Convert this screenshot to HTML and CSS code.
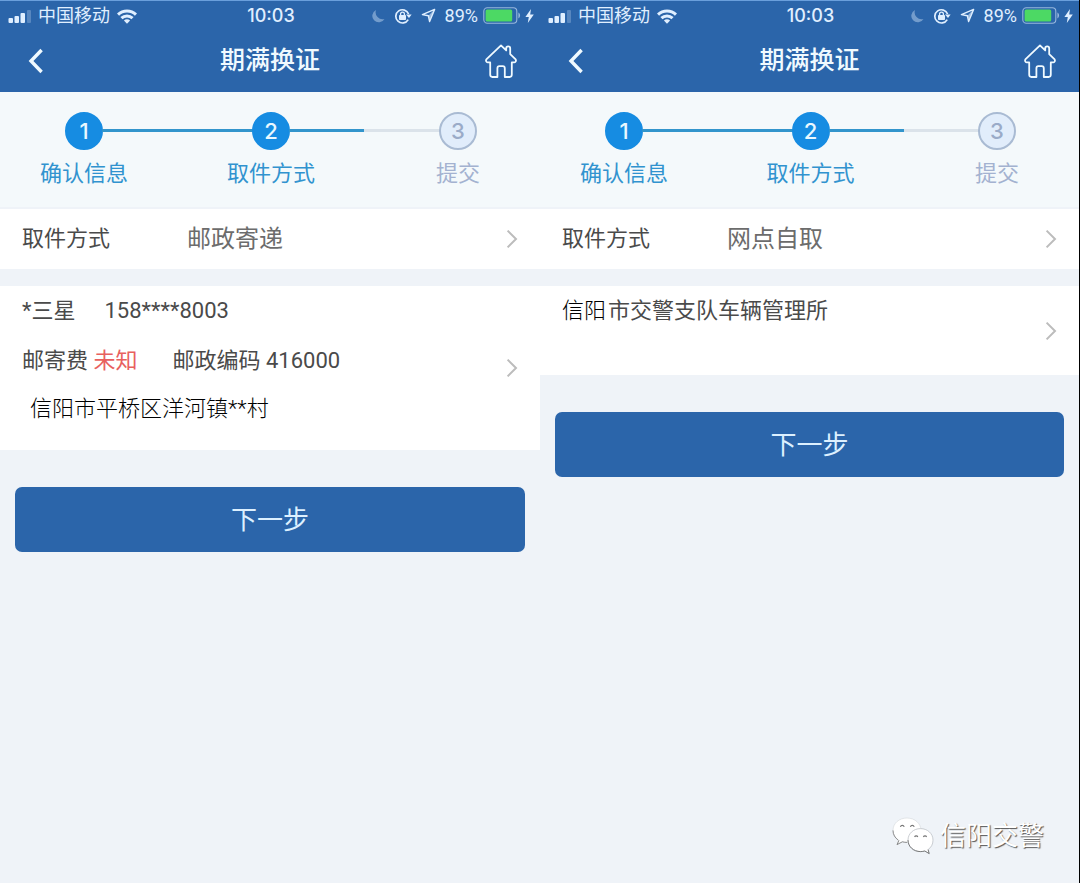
FILE: index.html
```html
<!DOCTYPE html>
<html lang="zh-CN">

<head>
    <meta charset="UTF-8">
    <meta name="viewport" content="width=device-width, initial-scale=1.0">
    <title>期满换证</title>
    <link rel="stylesheet" href="styles.css">
</head>

<body>
    <!-- shared icons -->
    <svg class="sprite" aria-hidden="true">
        <symbol id="signal" viewBox="0 0 24 14">
            <rect x="0.5" y="9" width="4.5" height="5" rx="1" />
            <rect x="6.5" y="7" width="4.5" height="7" rx="1" />
            <rect x="12.5" y="4" width="4.5" height="10" rx="1" />
            <rect x="19" y="1" width="4" height="13" rx="1" opacity="0.25" />
        </symbol>
        <symbol id="wifi" viewBox="0 0 22 16">
            <path d="M1 5.6a14.4 14.4 0 0 1 20 0l-2.1 2.2a11.3 11.3 0 0 0-15.8 0z" />
            <path d="M4.4 9.1a9.5 9.5 0 0 1 13.2 0l-2.1 2.2a6.4 6.4 0 0 0-9 0z" />
            <path d="M7.9 12.6a4.5 4.5 0 0 1 6.2 0L11 15.8z" />
        </symbol>
        <symbol id="moon" viewBox="0 0 14 14">
            <path d="M5 1a6.5 6.5 0 1 0 8.5 9A7 7 0 0 1 5 1z" />
        </symbol>
        <symbol id="lock" viewBox="0 0 18 16">
            <path d="M14.2 11.6A6.6 6.6 0 1 1 14.6 6" fill="none" stroke="currentColor" stroke-width="1.7" />
            <path d="M12 6.6h5.6L15 10z" />
            <rect x="5" y="7" width="7" height="5" rx="0.8" />
            <path d="M6.6 7.4V6a1.9 1.9 0 0 1 3.8 0v1.4" fill="none" stroke="currentColor" stroke-width="1.3" />
        </symbol>
        <symbol id="location" viewBox="0 0 15 15">
            <path d="M13.6 1.4 1.4 6.6l6 1.2 1.2 5.8z" fill="none" stroke="currentColor" stroke-width="1.4" stroke-linejoin="round" />
            <path d="M13.4 1.6 7.4 7.8l1.2 5.8z" opacity="0.6" />
        </symbol>
        <symbol id="battery" viewBox="0 0 38 17">
            <rect x="0.8" y="0.8" width="33" height="15.4" rx="3.5" fill="none" stroke="currentColor" stroke-width="1.1" opacity="0.6" />
            <rect x="2.6" y="2.6" width="26.6" height="11.8" rx="1.5" fill="#4cd964" />
            <path d="M35.4 5.6c2.2.8 2.2 5 0 5.8z" opacity="0.6" />
        </symbol>
        <symbol id="bolt" viewBox="0 0 9 14">
            <path d="M6 0 .4 8h3.4L2.8 14 8.8 5.6H5.2z" />
        </symbol>
        <symbol id="back" viewBox="0 0 16 26">
            <path d="M13.6 2 3 13l10.6 11" fill="none" stroke="currentColor" stroke-width="3.4" />
        </symbol>
        <symbol id="home" viewBox="0 0 34 36">
            <path d="M17 2.4 2.6 16.2c-1.2 1.4-.4 3 1.2 3.2h2.4v12.2c0 1.6.8 2.4 2.2 2.4h5v-8.6c0-1.4.8-2.2 2-2.2h3.4c1.2 0 2 .8 2 2.2V34h4.8c1.4 0 2.2-.8 2.2-2.4V19.4h2.4c1.6-.2 2.4-1.8 1.2-3.2l-5.2-5V5.4c0-2.6-4-2.6-4 0v2z" fill="none" stroke="currentColor" stroke-width="1.8" stroke-linejoin="round" />
        </symbol>
        <symbol id="arrow" viewBox="0 0 12 20">
            <path d="M1.6 1.6 10 10l-8.4 8.4" fill="none" stroke="currentColor" stroke-width="2" />
        </symbol>
        <symbol id="wechat" viewBox="0 0 42 38">
            <path d="M15 1C7 1 1 6.4 1 13.4c0 4.2 2 7.4 5.400 9.800L5 27.600l5.400-2.800c1.600.4 3 .6 4.600.6 8 0 14-5.200 14-12S23 1 15 1z" fill="#fff" stroke="#d3d6da" stroke-width="0.6" />
            <path d="M7 23.400 5 27.600l5.400-2.800c1.600.4 3 .6 4.600.6M1 13.400c0 4.200 2 7.400 5.400 9.800" fill="none" stroke="#777" stroke-width="0.8" />
            <path d="M28.5 11.600c-7 0-12.500 5-12.500 11.500s5.500 11.500 12.500 11.500c1.500 0 3-.2 4.300-.6l4.400 2.600-1.100-4c3-2.200 4.900-5.200 4.900-9.500 0-6.500-5.500-11.500-12.500-11.500z" fill="#fff" stroke="#b5b9be" stroke-width="0.7" />
            <path d="M16 23.100c0 6.500 5.500 11.500 12.500 11.500 1.500 0 3-.2 4.300-.6l4.400 2.600-1.100-4" fill="none" stroke="#666" stroke-width="0.8" />
            <path d="M8.4 9.8a2 2 0 0 1 3.8 0M18.4 9.800a2 2 0 0 1 3.800 0M22.600 20a1.700 1.700 0 0 1 3.200 0M31.400 20a1.700 1.700 0 0 1 3.200 0" fill="none" stroke="#777" stroke-width="1.1" />
        </symbol>
    </svg>

    <main class="screens">
        <section class="phone">
            <header class="header">
                <div class="status-bar">
                    <div class="status-left">
                        <svg class="icon-signal"><use href="#signal" /></svg>
                        <span>中国移动</span>
                        <svg class="icon-wifi"><use href="#wifi" /></svg>
                    </div>
                    <span class="time">10:03</span>
                    <div class="status-right">
                        <svg class="icon-moon"><use href="#moon" /></svg>
                        <svg class="icon-lock"><use href="#lock" /></svg>
                        <svg class="icon-location"><use href="#location" /></svg>
                        <span class="percent">89%</span>
                        <svg class="icon-battery"><use href="#battery" /></svg>
                        <svg class="icon-bolt"><use href="#bolt" /></svg>
                    </div>
                </div>
                <nav class="nav-bar">
                    <a href="#" aria-label="返回"><svg class="icon-back"><use href="#back" /></svg></a>
                    <h1>期满换证</h1>
                    <a href="#" class="home-link" aria-label="首页"><svg class="icon-home"><use href="#home" /></svg></a>
                </nav>
            </header>

            <div class="steps">
                <div class="step active"><span class="circle">1</span><span>确认信息</span></div>
                <div class="line"></div>
                <div class="step active"><span class="circle">2</span><span>取件方式</span></div>
                <div class="line half"></div>
                <div class="step"><span class="circle">3</span><span>提交</span></div>
            </div>

            <a href="#" class="row">
                <span class="row-label">取件方式</span>
                <span class="row-value">邮政寄递</span>
                <svg class="icon-arrow"><use href="#arrow" /></svg>
            </a>

            <a href="#" class="card">
                <div class="card-text address-text">
                    <p><span class="name">*三星</span><span>158****8003</span></p>
                    <p><span>邮寄费</span> <span class="unknown">未知</span><span>邮政编码 416000</span></p>
                    <p class="address">信阳市平桥区洋河镇**村</p>
                </div>
                <svg class="icon-arrow"><use href="#arrow" /></svg>
            </a>

            <button type="button" class="next-button">下一步</button>
        </section>

        <section class="phone">
            <header class="header">
                <div class="status-bar">
                    <div class="status-left">
                        <svg class="icon-signal"><use href="#signal" /></svg>
                        <span>中国移动</span>
                        <svg class="icon-wifi"><use href="#wifi" /></svg>
                    </div>
                    <span class="time">10:03</span>
                    <div class="status-right">
                        <svg class="icon-moon"><use href="#moon" /></svg>
                        <svg class="icon-lock"><use href="#lock" /></svg>
                        <svg class="icon-location"><use href="#location" /></svg>
                        <span class="percent">89%</span>
                        <svg class="icon-battery"><use href="#battery" /></svg>
                        <svg class="icon-bolt"><use href="#bolt" /></svg>
                    </div>
                </div>
                <nav class="nav-bar">
                    <a href="#" aria-label="返回"><svg class="icon-back"><use href="#back" /></svg></a>
                    <h1>期满换证</h1>
                    <a href="#" class="home-link" aria-label="首页"><svg class="icon-home"><use href="#home" /></svg></a>
                </nav>
            </header>

            <div class="steps">
                <div class="step active"><span class="circle">1</span><span>确认信息</span></div>
                <div class="line"></div>
                <div class="step active"><span class="circle">2</span><span>取件方式</span></div>
                <div class="line half"></div>
                <div class="step"><span class="circle">3</span><span>提交</span></div>
            </div>

            <a href="#" class="row">
                <span class="row-label">取件方式</span>
                <span class="row-value">网点自取</span>
                <svg class="icon-arrow"><use href="#arrow" /></svg>
            </a>

            <a href="#" class="card">
                <div class="card-text office-text">
                    <p><span class="city">信阳</span>市交警支队车辆管理所</p>
                </div>
                <svg class="icon-arrow"><use href="#arrow" /></svg>
            </a>

            <button type="button" class="next-button">下一步</button>
        </section>
    </main>

    <div class="watermark">
        <svg class="icon-wechat"><use href="#wechat" /></svg>
        <span>信阳交警</span>
    </div>
</body>

</html>
```
FILE: styles.css
```css
* {
    margin: 0;
    padding: 0;
    box-sizing: border-box;
}

body {
    position: relative;
    min-height: 100vh;
    background-color: #eff3f8;
    font-family: Roboto, "Noto Sans CJK SC", sans-serif;
    font-size: 22px;
    color: #4a4a4a;
}

a {
    color: inherit;
    text-decoration: none;
}

svg {
    display: block;
    flex-shrink: 0;
    fill: currentColor;
}

.sprite {
    position: absolute;
    width: 0;
    height: 0;
}

.screens {
    display: grid;
    grid-template-columns: 1fr 1fr;
    min-height: 100vh;
}

.phone:last-child {
    border-right: 1px solid #000;
}

/* header */
.header {
    height: 92px;
    background-color: #2b65aa;
    border-top: 1px solid #6a9fdc;
    color: #f0faff;
}

.status-bar {
    display: grid;
    grid-template-columns: 1fr auto 1fr;
    align-items: center;
    height: 29px;
    padding: 0 6px 0 8px;
    font-size: 18px;
    line-height: 28px;
    color: #e0efff;
}

.status-left,
.status-right {
    display: flex;
    align-items: center;
}

.status-left {
    gap: 6px;
}

.status-right {
    justify-content: flex-end;
    gap: 9px;
}

.time {
    font-family: Inter, sans-serif;
    font-weight: 500;
}

.percent {
    margin-right: -4px;
}

.icon-signal {
    width: 24px;
    height: 14px;
}

.icon-wifi {
    width: 22px;
    height: 16px;
}

.icon-moon {
    width: 14px;
    height: 14px;
    opacity: 0.4;
}

.icon-lock {
    width: 18px;
    height: 16px;
}

.icon-location {
    width: 15px;
    height: 15px;
}

.icon-battery {
    width: 38px;
    height: 17px;
}

.icon-bolt {
    width: 9px;
    height: 14px;
    margin-left: -5px;
}

.nav-bar {
    display: grid;
    grid-template-columns: 1fr auto 1fr;
    align-items: center;
    height: 62px;
    padding: 0 22px;
}

.nav-bar h1 {
    font-size: 25px;
    font-weight: 500;
    line-height: 36px;
}

.home-link {
    justify-self: end;
}

.icon-back {
    width: 16px;
    height: 26px;
    margin-left: 6px;
}

.icon-home {
    width: 34px;
    height: 36px;
}

/* progress steps */
.steps {
    display: flex;
    align-items: flex-start;
    height: 115px;
    padding: 20px 38px 0 40px;
    background-color: #f4f9fb;
}

.step {
    display: flex;
    flex-direction: column;
    align-items: center;
    gap: 8px;
    width: 88px;
    line-height: 32px;
    color: #a3b2d0;
}

.step.active {
    color: #3193cf;
}

.circle {
    display: flex;
    justify-content: center;
    align-items: center;
    width: 38px;
    height: 38px;
    border: 2px solid #a9bbd3;
    border-radius: 50%;
    background-color: #e1edfb;
    font-family: Inter, sans-serif;
    font-weight: 500;
    color: #9aabc8;
}

.active .circle {
    border-color: #168ce2;
    background-color: #168ce2;
    color: #e9f8ff;
}

.line {
    flex: 1;
    height: 3px;
    margin: 17px -26px 0;
    background-color: #3295cc;
}

.line.half {
    background: linear-gradient(to right, #3295cc 50%, #dbe3ea 50%);
}

/* list rows */
.row {
    display: flex;
    align-items: center;
    height: 60px;
    margin: 2px 0 17px;
    padding: 0 22px;
    background-color: #fff;
    line-height: 36px;
}

.row-label {
    width: 165px;
}

.row-value {
    flex: 1;
    font-size: 24px;
    color: #6c6c6c;
}

.icon-arrow {
    width: 12px;
    height: 20px;
    color: #bcbcbc;
}

.card {
    display: flex;
    align-items: center;
    justify-content: space-between;
    padding: 0 22px;
    background-color: #fff;
    line-height: 50px;
}

.address-text {
    padding-bottom: 18px;
}

.office-text {
    padding-bottom: 39px;
}

.name {
    margin-right: 29px;
}

.unknown {
    margin-right: 35px;
    color: #e8605e;
}

.address {
    padding-left: 8px;
    line-height: 46px;
    font-weight: 300;
    color: #000;
}

.city {
    margin-right: 2px;
    font-weight: 300;
    color: #000;
}

.next-button {
    display: block;
    width: calc(100% - 30px);
    height: 65px;
    margin: 37px 15px 0;
    border: none;
    border-radius: 7px;
    background-color: #2b65aa;
    font-family: inherit;
    font-size: 26px;
    line-height: 36px;
    color: #dcf0ff;
    cursor: pointer;
}

/* account mark over the page corner */
.watermark {
    position: absolute;
    right: 36px;
    bottom: 28px;
    display: flex;
    align-items: center;
    gap: 6px;
    font-size: 26px;
    line-height: 38px;
    color: #fff;
    text-shadow: 1px 1px 1px #555;
}

.icon-wechat {
    width: 42px;
    height: 38px;
}
```
